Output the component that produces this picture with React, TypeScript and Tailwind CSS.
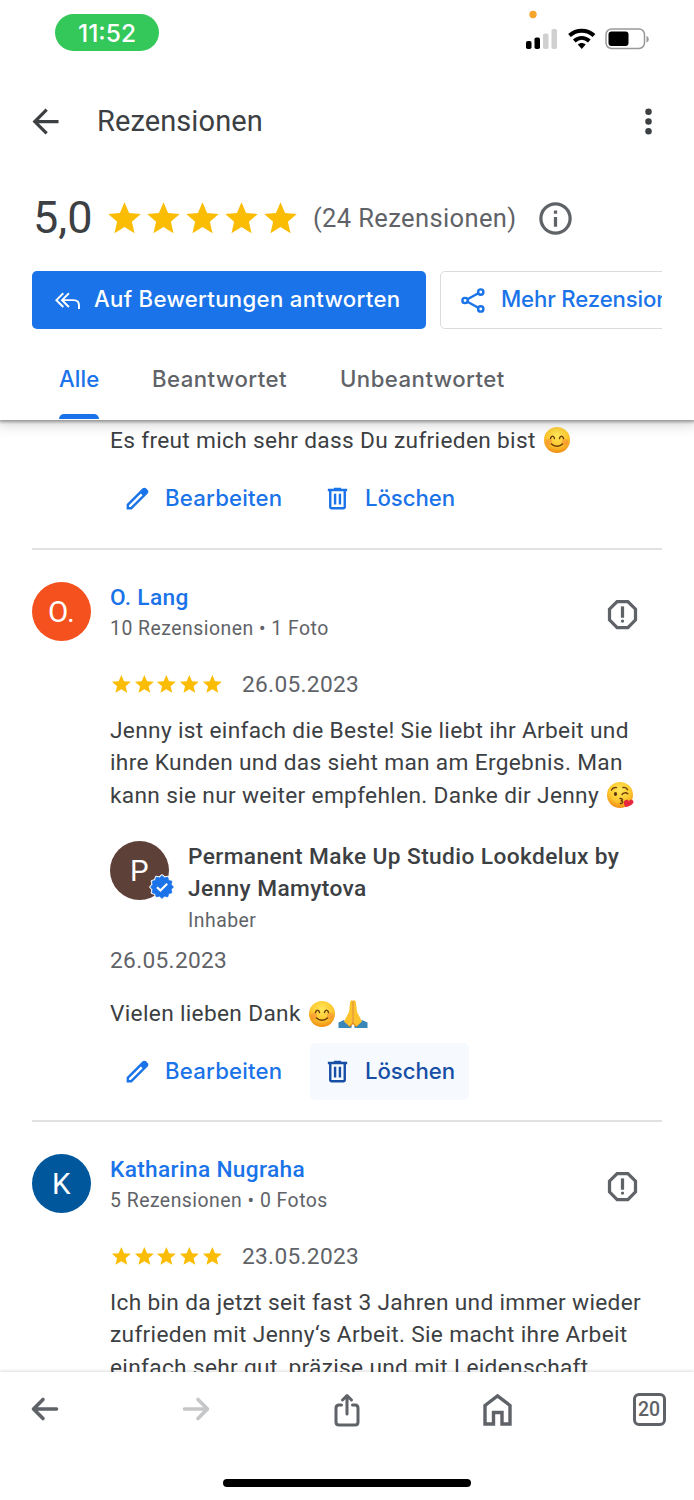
import type { ReactNode } from 'react';

type Review = {
  name: string;
  initial: string;
  color: string;
  meta: string;
  date: string;
  text: ReactNode[];
};

const reviews: Review[] = [
  {
    name: 'O. Lang',
    initial: 'O.',
    color: 'bg-[#f4511e]',
    meta: '10 Rezensionen • 1 Foto',
    date: '26.05.2023',
    text: [
      'Jenny ist einfach die Beste! Sie liebt ihr Arbeit und',
      'ihre Kunden und das sieht man am Ergebnis. Man',
      <>kann sie nur weiter empfehlen. Danke dir Jenny <KissEmoji /></>,
    ],
  },
  {
    name: 'Katharina Nugraha',
    initial: 'K',
    color: 'bg-[#01579b]',
    meta: '5 Rezensionen • 0 Fotos',
    date: '23.05.2023',
    text: [
      'Ich bin da jetzt seit fast 3 Jahren und immer wieder',
      'zufrieden mit Jenny‘s Arbeit. Sie macht ihre Arbeit',
      'einfach sehr gut, präzise und mit Leidenschaft.',
    ],
  },
];

export default function App() {
  return (
    <div className="flex h-[1500px] w-[694px] flex-col overflow-hidden bg-white font-['Roboto',sans-serif] text-[#3c4043]">
      {/* Header */}
      <header className="relative z-10 flex h-[420px] shrink-0 flex-col bg-white shadow-[0_1px_3px_1px_rgba(0,0,0,0.35),0_4px_12px_2px_rgba(0,0,0,0.14)]">
        <StatusBar />

        <div className="flex h-[92px] items-center pl-[26px] pr-[26px]">
          <svg viewBox="0 0 24 24" className="size-[39px]" fill="#3c4043">
            <path d="M20 11H7.83l5.59-5.59L12 4l-8 8 8 8 1.41-1.41L7.83 13H20v-2z" />
          </svg>
          <h1 className="ml-[32px] pt-[2px] text-[29px] tracking-[0.1px]">Rezensionen</h1>
          <svg viewBox="0 0 24 24" className="ml-auto size-[39px]" fill="#3c4043">
            <circle cx="12" cy="6" r="2" />
            <circle cx="12" cy="12" r="2" />
            <circle cx="12" cy="18" r="2" />
          </svg>
        </div>

        <div className="flex h-[102px] items-center pl-[33px]">
          <span className="w-[72px] text-[45px]">5,0</span>
          <div className="flex">
            {[0, 1, 2, 3, 4].map((i) => <Star key={i} className="size-[39px]" />)}
          </div>
          <span className="ml-[13px] text-[25.5px] tracking-[0.38px] text-[#5f6368]">(24 Rezensionen)</span>
          <svg viewBox="0 0 24 24" className="ml-[19px] size-[39px]" fill="none" stroke="#5f6368" strokeWidth="2">
            <circle cx="12" cy="12" r="9" />
            <path d="M12 11v6M12 7v2" />
          </svg>
        </div>

        <div className="mx-[32px] mt-[2px] flex h-[58px] gap-[14px] overflow-hidden font-['Inter',sans-serif] text-[22.2px] font-medium">
          <button className="flex w-[394px] shrink-0 items-center rounded-[5px] bg-[#1a73e8] pl-[21px] text-white">
            <svg viewBox="0 0 24 24" className="size-[29px]" fill="none" stroke="currentColor" strokeWidth="1.6">
              <path d="M8.5 6 2.8 11.7l5.7 5.7M13.2 6l-5.7 5.7 5.7 5.7M7.5 11.7H17c3 0 4.5 1.7 4.5 4.3v3" />
            </svg>
            <span className="-mt-[2px] ml-[12px] whitespace-nowrap tracking-[0.3px]">Auf Bewertungen antworten</span>
          </button>
          <button className="flex w-[360px] shrink-0 items-center rounded-[5px] border-[1.5px] border-[#dadce0] pl-[18px] text-[#1a73e8]">
            <svg viewBox="0 0 24 24" className="size-[29px]" fill="none" stroke="currentColor" strokeWidth="2">
              <circle cx="18" cy="5" r="2.2" />
              <circle cx="5" cy="12" r="2.2" />
              <circle cx="18" cy="19" r="2.2" />
              <path d="m7 11 9-5M7 13l9 5" />
            </svg>
            <span className="-mt-[2px] ml-[13px] whitespace-nowrap tracking-[-0.15px]">Mehr Rezensionen</span>
          </button>
        </div>

        <nav className="flex h-[91px] pl-[59px] font-['Inter',sans-serif] text-[22.2px] font-medium tracking-[0.45px] text-[#5f6368]">
          <div className="flex w-[40px] flex-col text-[#1a73e8]">
            <span className="flex flex-1 items-center pt-[15px] tracking-[0.1px]">Alle</span>
            <span className="mb-px h-[5px] rounded-t-[5px] bg-[#1a73e8]" />
          </div>
          <span className="ml-[53px] mt-[37px] h-[26px] w-[188px] leading-[26px]">Beantwortet</span>
          <span className="mt-[37px] h-[26px] leading-[26px]">Unbeantwortet</span>
        </nav>
      </header>

      {/* Reviews */}
      <main className="min-h-0 flex-1 overflow-hidden px-[32px] text-[22.7px] leading-[32.4px] tracking-[0.32px]">
        <section className="h-[130px] border-b-2 border-[#e0e1e3] pl-[78px] pt-[5px]">
          <p className="whitespace-nowrap">Es freut mich sehr dass Du zufrieden bist <SmileEmoji /></p>
          <Actions className="mt-[13px]" />
        </section>

        <section className="h-[572px] border-b-2 border-[#e0e1e3] pt-[32px]">
          <ReviewBody review={reviews[0]} />
          <div className="pl-[78px]">
            <div className="mt-[28px] flex">
              <div className="relative mt-px flex size-[59px] shrink-0 items-center justify-center rounded-full bg-[#5d4037] pt-[2px] text-[29.5px] text-white">
                P
                <VerifiedBadge />
              </div>
              <div className="ml-[19px] pt-px">
                <p className="whitespace-nowrap font-medium tracking-[0.4px]">Permanent Make Up Studio Lookdelux by<br />Jenny Mamytova</p>
                <p className="mt-[2px] text-[19.4px] leading-[26px] tracking-[0.49px] text-[#5f6368]">Inhaber</p>
              </div>
            </div>
            <p className="mt-[11.5px] text-[#5f6368]">26.05.2023</p>
            <p className="mt-[20px] flex items-center whitespace-pre">Vielen lieben Dank <SmileEmoji /><PrayEmoji /></p>
            <Actions className="mt-[13px]" active />
          </div>
        </section>

        <section className="pt-[32px]">
          <ReviewBody review={reviews[1]} />
        </section>
      </main>

      <BottomBar />
    </div>
  );
}

function StatusBar() {
  return (
    <div className="flex h-[75px] items-start justify-between pl-[55px] pr-[44px]">
      <div className="mt-[14px] flex h-[37px] w-[104px] items-center justify-center rounded-full bg-[#34c759] pt-[2px] font-['Inter',sans-serif] text-[24.5px] font-medium text-white">
        11:52
      </div>
      <svg viewBox="0 0 125 75" className="h-[75px] w-[125px]">
        <circle cx="8" cy="14.5" r="3.7" fill="#f7a62d" />
        <rect x="1" y="41" width="5.5" height="8" rx="1.8" />
        <rect x="9.5" y="37.5" width="5.5" height="11.5" rx="1.8" />
        <rect x="18" y="33.5" width="5.5" height="15.5" rx="1.8" fill="#d0d0d0" />
        <rect x="26.5" y="29" width="5.5" height="20" rx="1.8" fill="#d0d0d0" />
        <g fill="none" stroke="#000" strokeWidth="4">
          <path d="M44.5 35.5c7-6.5 17.5-6.5 24.5 0" />
          <path d="M49.3 41c4.5-4 10.500-4 15 0" />
        </g>
        <path d="M52.8 44.5c2.4-2 5.5-2 7.9 0l-3.95 4.4z" />
        <rect x="81" y="29" width="38.5" height="19.5" rx="5.5" fill="none" stroke="#999" strokeWidth="1.5" />
        <rect x="83.5" y="31.5" width="20" height="14.5" rx="3" />
        <path d="M121.5 36v6.5c3-1 3-5.5 0-6.5z" fill="#999" />
      </svg>
    </div>
  );
}

function ReviewBody({ review }: { review: Review }) {
  return (
    <>
      <div className="flex">
        <div className={`flex size-[59px] shrink-0 items-center justify-center rounded-full pt-[2px] text-[29.5px] text-white ${review.color}`}>
          {review.initial}
        </div>
        <div className="ml-[19px]">
          <p className="font-medium text-[#1a73e8]">{review.name}</p>
          <p className="mt-[2px] text-[19.4px] leading-[26px] tracking-[0.49px] text-[#5f6368]">{review.meta}</p>
        </div>
        <svg viewBox="0 0 24 24" className="ml-auto mr-[20px] mt-[13px] size-[39px]" fill="#5f6368">
          <path d="M15.73 3H8.27L3 8.27v7.46L8.27 21h7.46L21 15.73V8.27L15.73 3zM19 14.9L14.9 19H9.1L5 14.9V9.1L9.1 5h5.8L19 9.1v5.8z" />
          <circle cx="12" cy="16" r="1" />
          <path d="M11 7h2v7h-2z" />
        </svg>
      </div>
      <div className="pl-[78px]">
        <div className="mt-[27px] flex items-center">
          <div className="-mt-[3px] flex">
            {[0, 1, 2, 3, 4].map((i) => <Star key={i} className="size-[22.7px]" />)}
          </div>
          <span className="ml-[18.5px] text-[#5f6368]">{review.date}</span>
        </div>
        <div className="mt-[13px]">
          {review.text.map((line, i) => <p key={i} className="whitespace-nowrap">{line}</p>)}
        </div>
      </div>
    </>
  );
}

function Actions({ className, active }: { className?: string; active?: boolean }) {
  return (
    <div className={`flex h-[57px] font-['Inter',sans-serif] text-[22.2px] font-medium tracking-[0.2px] text-[#1a73e8] ${className}`}>
      <button className="flex w-[200px] items-center pl-[13px]">
        <svg viewBox="0 0 24 24" className="size-[29px]" fill="currentColor">
          <path d="M20.41 4.94l-1.35-1.35c-.78-.78-2.05-.78-2.83 0L3 16.82V21h4.18L20.41 7.77c.79-.78.79-2.05 0-2.83zM6.41 19.06L5 19v-1.36l9.82-9.82 1.41 1.41-9.82 9.83z" />
        </svg>
        <span className="-mt-px ml-[13px]">Bearbeiten</span>
      </button>
      <button className={`flex w-[159px] items-center rounded-[5px] pl-[13px] ${active ? 'bg-[#f6fafe] text-[#174ea6]' : ''}`}>
        <svg viewBox="0 0 24 24" className="size-[29px]" fill="currentColor">
          <path d="M15 4V3H9v1H4v2h1v13c0 1.1.9 2 2 2h10c1.1 0 2-.9 2-2V6h1V4h-5zm2 15H7V6h10v13zM9 8h2v9H9zm4 0h2v9h-2z" />
        </svg>
        <span className="-mt-px ml-[13px] tracking-[-0.05px]">Löschen</span>
      </button>
    </div>
  );
}

function BottomBar() {
  return (
    <footer className="relative z-10 flex h-[128px] shrink-0 flex-col items-center bg-white shadow-[0_-1px_3px_rgba(0,0,0,0.14)]">
      <div className="flex h-[74px] w-full items-center justify-between px-[25px]">
        <svg viewBox="0 0 40 40" className="size-[40px]" fill="none" stroke="#5f6368" strokeWidth="3.6" strokeLinecap="round" strokeLinejoin="round">
          <path d="M31.5 20H9M18 10.5 8.5 20l9.5 9.5" />
        </svg>
        <svg viewBox="0 0 40 40" className="size-[40px]" fill="none" stroke="#c4c6c8" strokeWidth="3.6" strokeLinecap="round" strokeLinejoin="round">
          <path d="M8.5 20H31M22 10.5l9.5 9.5-9.5 9.5" />
        </svg>
        <svg viewBox="0 0 40 40" className="size-[40px]" fill="none" stroke="#5f6368" strokeWidth="3" strokeLinecap="round" strokeLinejoin="round">
          <path d="M14.5 16H12c-2 0-3 1-3 3v14c0 2 1 3 3 3h16c2 0 3-1 3-3V19c0-2-1-3-3-3h-2.5M20 25V7M15.5 11 20 6.5l4.5 4.5" />
        </svg>
        <svg viewBox="0 0 40 40" className="size-[40px]" fill="none" stroke="#5f6368" strokeWidth="3.4">
          <path d="M7 35V16.500L19.5 7 32 16.5V35H24V23.500h-8.500V35z" />
        </svg>
        <div className="flex size-[40px] items-center justify-center">
          <span className="flex size-[33px] items-center justify-center rounded-[6px] border-[3px] border-[#5f6368] pt-px text-[19.5px] font-medium text-[#5f6368]">20</span>
        </div>
      </div>
      <div className="mt-[33px] h-[8px] w-[248px] rounded-full bg-black" />
    </footer>
  );
}

function Star({ className }: { className?: string }) {
  return (
    <svg viewBox="0 0 24 24" className={className} fill="#fbbc04">
      <path d="M12 17.27L18.18 21l-1.64-7.03L22 9.24l-7.19-.61L12 2 9.19 8.63 2 9.24l5.46 4.73L5.82 21z" />
    </svg>
  );
}

const badgePoints = Array.from({ length: 24 }, (_, i) => {
  const r = i % 2 ? 9.6 : 11.5;
  const a = (i * Math.PI) / 12;
  return `${(13 + r * Math.sin(a)).toFixed(2)},${(13 - r * Math.cos(a)).toFixed(2)}`;
}).join(' ');

function VerifiedBadge() {
  return (
    <svg viewBox="0 0 26 26" className="absolute -right-[6px] top-[33px] size-[26px]">
      <polygon points={badgePoints} fill="#fff" stroke="#fff" strokeWidth="2.6" strokeLinejoin="round" />
      <polygon points={badgePoints} fill="#1a73e8" stroke="#1a73e8" strokeWidth="0.6" strokeLinejoin="round" />
      <path d="m8 13.2 3.4 3.3 6.8-6.8" fill="none" stroke="#fff" strokeWidth="2.2" />
    </svg>
  );
}

/* Emoji */

function Face({ children }: { children: ReactNode }) {
  return (
    <svg viewBox="0 0 28 28" className="ml-px inline-block size-[28px] align-[-6px]">
      <defs>
        <radialGradient id="face" cx="50%" cy="32%" r="68%">
          <stop offset="0" stopColor="#ffe65a" />
          <stop offset="0.6" stopColor="#fdc92f" />
          <stop offset="1" stopColor="#f08c14" />
        </radialGradient>
      </defs>
      <circle cx="14" cy="14" r="13" fill="url(#face)" />
      {children}
    </svg>
  );
}

function SmileEmoji() {
  return (
    <Face>
      <circle cx="6" cy="16" r="3.2" fill="#f4743b" opacity=".4" />
      <circle cx="22" cy="16" r="3.2" fill="#f4743b" opacity=".4" />
      <g fill="none" stroke="#6b3a0c" strokeWidth="1.4" strokeLinecap="round">
        <path d="M7.5 12.5c.7-3.2 3.3-3.2 4 0M16.500 12.500c.7-3.200 3.300-3.200 4 0M8.500 18c2.700 3 8.300 3 11 0" />
      </g>
    </Face>
  );
}

function KissEmoji() {
  return (
    <Face>
      <ellipse cx="9.5" cy="13" rx="1.6" ry="2.1" fill="#5c330c" />
      <g fill="none" stroke="#6b3a0c" strokeWidth="1.4" strokeLinecap="round">
        <path d="M5.5 9c1-2 3-2.8 5-2.4M17 6.5c2-.4 3.8.6 4.5 2.2M16 13.5c1.5-2 4-2.2 5.8-.7M14 17.5c3-.3 3.2 2 .7 2.300 3 .2 2.500 2.900-.4 2.700" />
      </g>
      <path d="M19.5 26c-2-3-2.300-6.100.2-7 1.500-.5 2.600.2 3 1.300 1-1.500 2.700-2 4.200-.9 2.200 2-1.600 5.800-7.400 6.600z" fill="#e8273c" />
    </Face>
  );
}

function PrayEmoji() {
  return (
    <svg viewBox="0 0 30 30" className="ml-[2px] inline-block size-[30px]">
      <path d="M.5 23.5 6 21l8 6.5-1 1.5H.5zM29.500 23.500 24 21l-8 6.500 1 1.500h12.500z" fill="#3b86b8" />
      <path d="M14.7 1.5c-1.700-.6-2.400.5-2.600 2L11 13l-5 9.500 5.500 5c2-1 3-2.500 3.200-5zM15.300 1.500c1.700-.6 2.400.5 2.600 2L19 13l5 9.500-5.500 5c-2-1-3-2.500-3.200-5z" fill="#fcc32c" />
      <path d="M15 2v20.5c0 2-1.500 4-4 5M15 22.500c0 2 1.500 4 4 5" fill="none" stroke="#e08a17" strokeWidth="1.2" />
    </svg>
  );
}
